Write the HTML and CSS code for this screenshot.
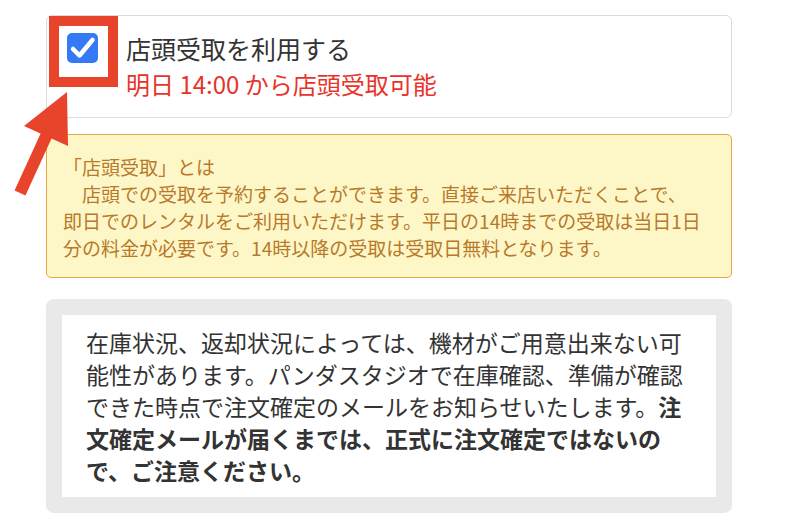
FILE: index.html
```html
<!DOCTYPE html>
<html lang="ja">
  <head>
    <meta charset="UTF-8" />
    <title>店頭受取</title>
    <link rel="stylesheet" href="styles.css">
  </head>
  <body>
    <div class="page">
      <label class="pickup-card">
        <svg class="check" width="31" height="30" viewBox="0 0 31 30">
          <rect x="0" y="0" width="31" height="30" rx="5" fill="#3479f6" />
          <path d="M6 16 L12.5 22.5 L25.5 7" fill="none" stroke="#fff" stroke-width="4.5" stroke-linecap="round" stroke-linejoin="round" />
        </svg>
        <span class="pickup-text">
          <span class="pickup-title">店頭受取を利用する</span>
          <span class="pickup-date">明日 14:00 から店頭受取可能</span>
        </span>
      </label>

      <div class="pickup-note">
        <p>「店頭受取」とは<br>　店頭での受取を予約することができます。直接ご来店いただくことで、即日でのレンタルをご利用いただけます。平日の14時までの受取は当日1日分の料金が必要です。14時以降の受取は受取日無料となります。</p>
      </div>

      <div class="notice">
        <div class="notice-inner">
          在庫状況、返却状況によっては、機材がご用意出来ない可能性があります。パンダスタジオで在庫確認、準備が確認できた時点で注文確定のメールをお知らせいたします。<strong>注文確定メールが届くまでは、正式に注文確定ではないので、ご注意ください。</strong>
        </div>
      </div>

      <!-- annotation overlay -->
      <span class="mark-box"></span>
      <svg class="mark-arrow" width="80" height="120" viewBox="0 0 80 120">
        <polygon points="67,12 24,46 68,66" fill="#e8432b" />
        <line x1="47" y1="54" x2="20" y2="113" stroke="#e8432b" stroke-width="12" />
      </svg>
    </div>
  </body>
</html>
```

FILE: styles.css
```css
body {
    margin: 0;
    font-family: "Noto Sans CJK JP", "Noto Sans", sans-serif;
    color: #333;
    background: #fff;
}
.page {
    position: relative;
    width: 686px;
    margin-left: 46px;
    padding-top: 15px;
}
.pickup-card {
    display: flex;
    align-items: flex-start;
    gap: 28px;
    border: 1px solid #dcdcdc;
    border-radius: 6px;
    padding: 14px 20px 15px;
}
.check { margin-top: 3px; flex: none; }
.pickup-text { display: flex; flex-direction: column; }
.pickup-title { font-size: 25px; line-height: 36px; color: #333; }
.pickup-date { font-size: 24px; line-height: 36px; color: #e8332b; }

.pickup-note {
    margin-top: 16px;
    background: #fdf7c8;
    border: 1px solid #e8a64a;
    border-radius: 5px;
    padding: 18px 26px 16px 16px;
    color: #b8792a;
    font-size: 19px;
    line-height: 27px;
}
.pickup-note p { margin: 0; }

.notice {
    margin-top: 21px;
    background: #e9e9e9;
    border-radius: 8px;
    padding: 16px;
}
.notice-inner {
    background: #fff;
    padding: 11px 24px;
    font-size: 23px;
    line-height: 32px;
    color: #333;
}
.notice-inner strong { font-weight: bold; }

/* red marker over the checkbox */
.mark-box {
    position: absolute;
    left: 3px;
    top: 16px;
    width: 49px;
    height: 51px;
    border: 10px solid #e8432b;
}
.mark-arrow {
    position: absolute;
    left: -46px;
    top: 80px;
}
```
